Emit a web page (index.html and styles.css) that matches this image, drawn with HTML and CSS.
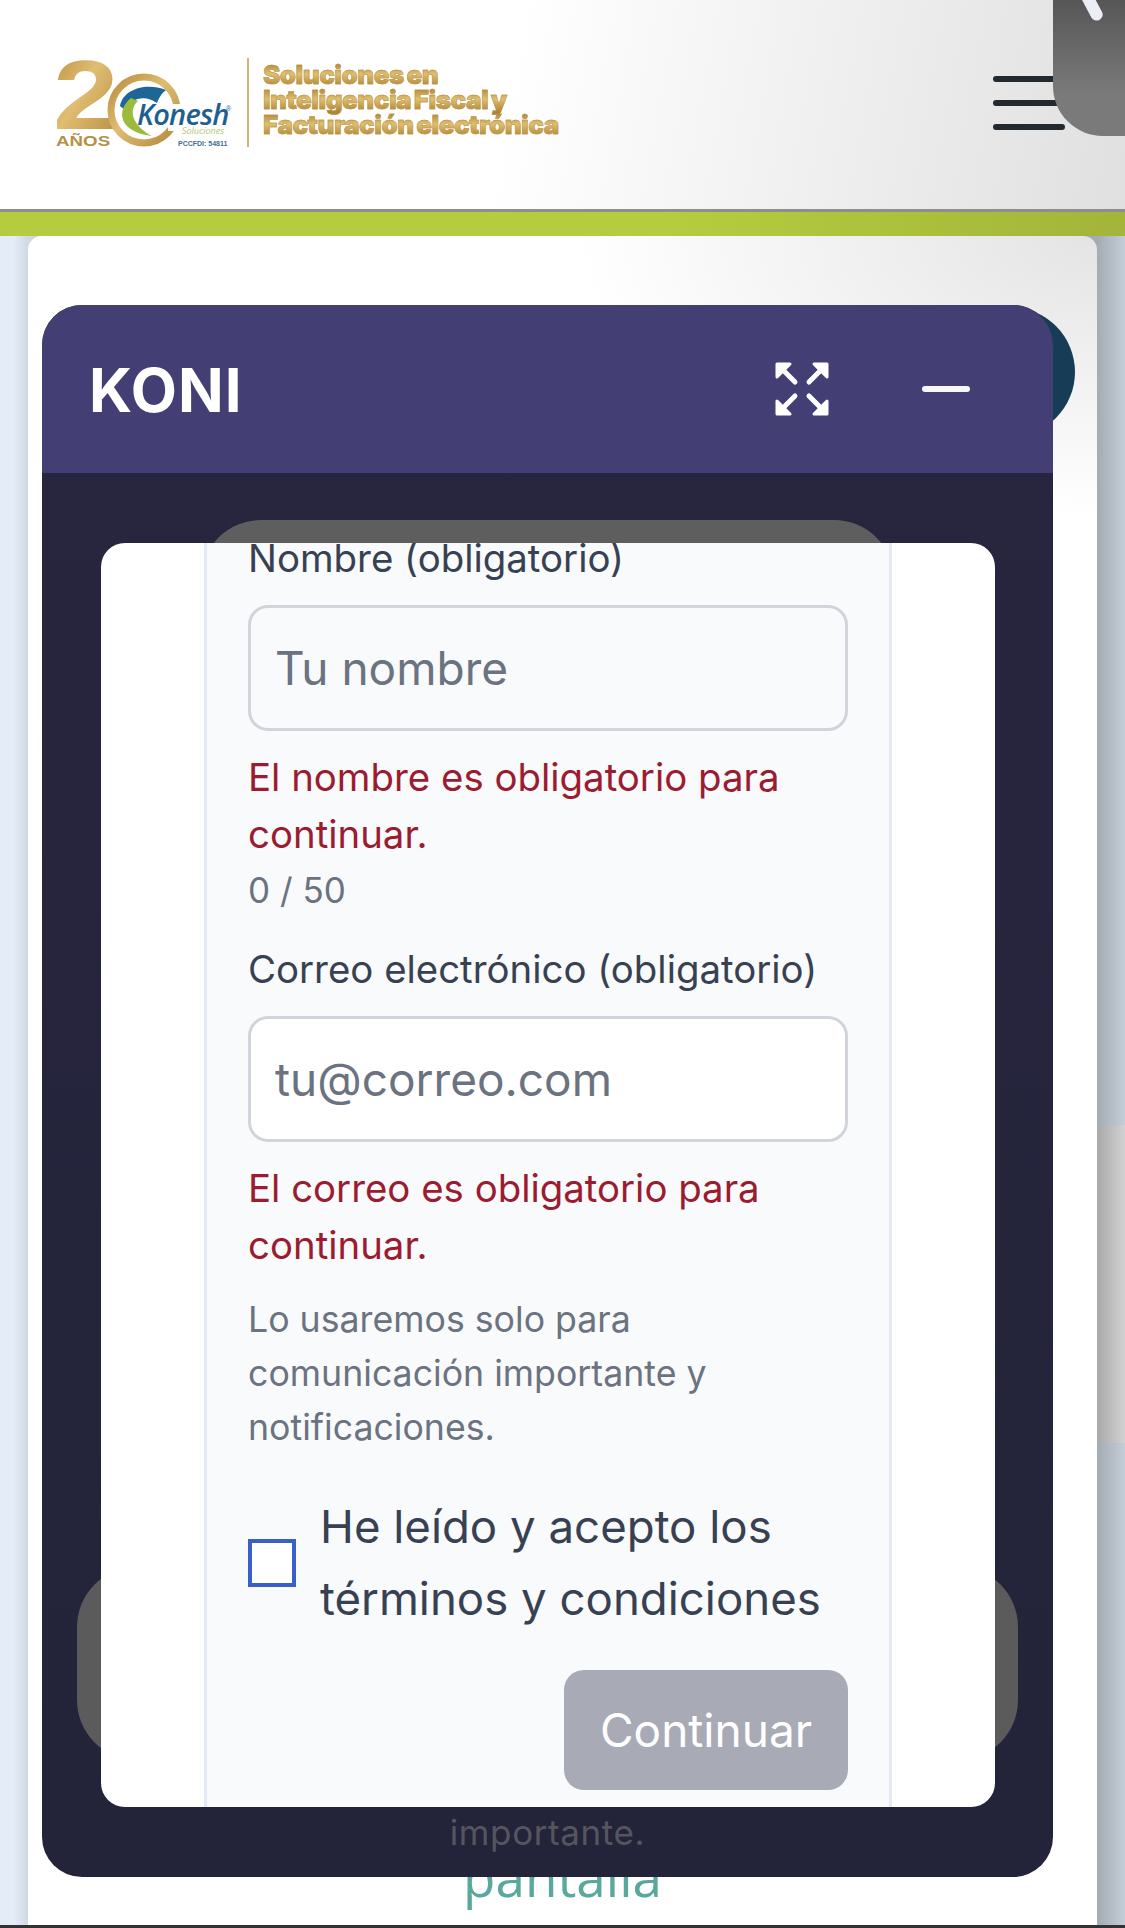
FILE: index.html
```html
<!DOCTYPE html>
<html lang="es">
  <head>
    <meta charset="UTF-8" />
    <meta name="viewport" content="width=device-width, initial-scale=1.0" />
    <title>Konesh Soluciones</title>
    <link rel="stylesheet" href="styles.css">
  </head>
  <body>
    <header class="site-header">
      <div class="brand">
        <svg class="brand-mark" width="190" height="100" viewBox="0 0 190 100">
          <defs>
            <linearGradient id="gold" x1="0" y1="0" x2="1" y2="1">
              <stop offset="0" stop-color="#b98c3e" />
              <stop offset="0.45" stop-color="#e0bd72" />
              <stop offset="1" stop-color="#b2883c" />
            </linearGradient>
          </defs>
          <text transform="translate(-3 69) scale(1.2 1)" class="mark-two" fill="url(#gold)">2</text>
          <circle cx="88" cy="50" r="33" fill="#fff" stroke="url(#gold)" stroke-width="7" />
          <text transform="translate(0 86) scale(1.25 1)" class="mark-years" fill="#b98f45">AÑOS</text>
          <rect x="112" y="44" width="60" height="27" fill="#fff" />
          <path d="M64 46 C67 29 90 22 110 30 C105 34 103 38 101 43 C90 35 75 37 69 50 Z" fill="#1f6596" />
          <path d="M75 38 C60 50 62 72 96 76 C80 68 70 52 82 41 Z" fill="#9bbb3c" />
          <text x="81" y="65" class="mark-name" fill="#1f5f8f">Konesh</text>
          <text x="170" y="51" class="mark-reg" fill="#1f5f8f">®</text>
          <text x="126" y="74" class="mark-sub" fill="#b4c873">Soluciones</text>
          <text x="122" y="86" class="mark-cert" fill="#3f6f96">PCCFDI: 54811</text>
        </svg>
        <span class="brand-line"></span>
        <p class="brand-text">Soluciones en<br />Inteligencia Fiscal y<br />Facturación electrónica</p>
      </div>
      <button class="menu-btn" aria-label="Menú"><span></span><span></span><span></span></button>
      <div class="float-btn"><span class="float-mark"></span></div>
    </header>
    <div class="green-bar"></div>

    <main class="page">
      <div class="card">
        <p class="card-text">pantalla</p>
      </div>
      <div class="side-shade"></div>
    </main>

    <div class="teal-circle"></div>

    <section class="chat">
      <div class="chat-head">
        <h2>KONI</h2>
        <div class="chat-tools">
          <svg width="54" height="54" viewBox="0 0 54 54" fill="#fff" stroke="#fff" stroke-linecap="round" stroke-linejoin="round">
            <path d="M5 5 L20 20" stroke-width="5" />
            <path d="M2 2 H15 L2 15 Z" stroke-width="3" />
            <path d="M49 5 L34 20" stroke-width="5" />
            <path d="M52 2 H39 L52 15 Z" stroke-width="3" />
            <path d="M5 49 L20 34" stroke-width="5" />
            <path d="M2 52 H15 L2 39 Z" stroke-width="3" />
            <path d="M49 49 L34 34" stroke-width="5" />
            <path d="M52 52 H39 L52 39 Z" stroke-width="3" />
          </svg>
          <span class="minus"></span>
        </div>
      </div>
      <div class="chat-body">
        <div class="ghost ghost-top"></div>
        <div class="ghost ghost-low"></div>
        <p class="ghost-text">importante.</p>

        <div class="dialog">
          <form class="form">
            <label class="field-label first" for="nombre">Nombre (obligatorio)</label>
            <input class="field-input grey" id="nombre" type="text" placeholder="Tu nombre" />
            <p class="error">El nombre es obligatorio para continuar.</p>
            <p class="counter">0 / 50</p>

            <label class="field-label second" for="correo">Correo electrónico (obligatorio)</label>
            <input class="field-input" id="correo" type="email" placeholder="tu@correo.com" />
            <p class="error">El correo es obligatorio para continuar.</p>
            <p class="hint">Lo usaremos solo para comunicación importante y notificaciones.</p>

            <div class="terms">
              <input class="terms-box" id="terms" type="checkbox" />
              <label for="terms">He leído y acepto los términos y condiciones</label>
            </div>

            <div class="actions">
              <button class="continue" type="button">Continuar</button>
            </div>
          </form>
        </div>
      </div>
    </section>
  </body>
</html>
```

FILE: styles.css
```css
* {
  box-sizing: border-box;
}
html,
body {
  margin: 0;
  height: 1928px;
  overflow: hidden;
}
body {
  position: relative;
  width: 1125px;
  font-family: Inter, "Liberation Sans", sans-serif;
  background: #fff;
  border-bottom: 3px solid #333;
}
p {
  margin: 0;
}

/* header */
.site-header {
  position: relative;
  height: 212px;
  padding: 58px 60px 0 56px;
  display: flex;
  justify-content: space-between;
  background: linear-gradient(100deg, #fff 45%, #e0e0e0 100%);
  border-bottom: 3px solid #8c8f8d;
}
.brand {
  display: flex;
  align-items: flex-start;
}
.brand-mark {
  margin-top: 2px;
  overflow: visible;
}
.mark-two {
  font: 700 98px "Liberation Sans", sans-serif;
}
.mark-years {
  font: 700 15px "Liberation Sans", sans-serif;
}
.mark-name {
  font: italic 600 29px "Open Sans", sans-serif;
  letter-spacing: -0.8px;
}
.mark-reg {
  font: 400 7px "Liberation Sans", sans-serif;
}
.mark-sub {
  font: italic 400 9px "Open Sans", sans-serif;
}
.mark-cert {
  font: 700 7px "Liberation Sans", sans-serif;
}
.brand-line {
  width: 2px;
  height: 89px;
  margin-left: 1px;
  background: #d2b478;
}
.brand-text {
  margin: 4px 0 0 14px;
  font-size: 26px;
  font-weight: 900;
  line-height: 25px;
  letter-spacing: -0.5px;
  word-spacing: -2px;
  color: transparent;
  background: repeating-linear-gradient(180deg, #a9822f 0, #e0bf70 12px, #ad8434 25px);
  -webkit-background-clip: text;
  background-clip: text;
  -webkit-text-stroke: 0.5px #b89044;
}
.menu-btn {
  display: flex;
  flex-direction: column;
  gap: 18px;
  align-self: flex-start;
  margin: 18px 0 0;
  padding: 0;
  border: none;
  background: none;
}
.menu-btn span {
  width: 72px;
  height: 6px;
  border-radius: 3px;
  background: #22292f;
}
.float-btn {
  position: absolute;
  top: 0;
  left: 1053px;
  width: 72px;
  height: 136px;
  border-bottom-left-radius: 50px;
  background: linear-gradient(180deg, #565656, #7a7a7a 70%);
  overflow: hidden;
}
.float-mark {
  position: absolute;
  top: -14px;
  left: 32px;
  width: 12px;
  height: 36px;
  border-radius: 6px;
  background: #eceef5;
  transform: rotate(-28deg);
}
.green-bar {
  height: 24px;
  background: linear-gradient(90deg, #b5cc3f 60%, #a3b53a 100%);
}

/* page behind the chat */
.page {
  position: relative;
  height: 1689px;
  padding: 0 28px;
  background: linear-gradient(90deg, #e4edf7 0, #e4edf7 14px, #d0d9e3 28px, #a3abb3 1097px, #c4ced8 1125px);
}
.card {
  height: 100%;
  padding-top: 1611px;
  text-align: center;
  border-top-left-radius: 14px;
  border-top-right-radius: 14px;
  background: radial-gradient(ellipse 520px 280px at 100% 0, #e4e4e4, #fff 100%);
}
.card-text {
  font-family: "Open Sans", sans-serif;
  font-size: 53px;
  line-height: 60px;
  color: #58a89c;
}
.side-shade {
  position: absolute;
  top: 889px;
  right: 0;
  width: 28px;
  height: 318px;
  background: linear-gradient(90deg, #a9a9a9, #d2d2d2);
}
.teal-circle {
  position: absolute;
  top: 307px;
  left: 945px;
  width: 130px;
  height: 130px;
  border-radius: 50%;
  background: #173c56;
}

/* chat window */
.chat {
  position: absolute;
  top: 305px;
  left: 42px;
  width: 1011px;
  height: 1572px;
  display: flex;
  flex-direction: column;
  border-radius: 40px;
  overflow: hidden;
  background: linear-gradient(180deg, #27263e, #23233a);
}
.chat-head {
  height: 168px;
  padding: 0 83px 0 47px;
  display: flex;
  align-items: flex-start;
  justify-content: space-between;
  background: #433e74;
}
.chat-head h2 {
  margin: 49px 0 0;
  font-size: 60px;
  font-weight: 700;
  line-height: 72px;
  letter-spacing: 1px;
  color: #fff;
}
.chat-tools {
  display: flex;
  align-items: flex-start;
  gap: 93px;
  margin-top: 57px;
}
.minus {
  width: 48px;
  height: 6px;
  margin-top: 24px;
  border-radius: 3px;
  background: #f7f6fb;
}
.chat-body {
  position: relative;
  flex: 1;
}
.ghost {
  position: absolute;
  border-radius: 60px;
  background: #5e5e5e;
}
.ghost-top {
  top: 47px;
  left: 159px;
  width: 693px;
  height: 200px;
}
.ghost-low {
  top: 1094px;
  left: 35px;
  width: 941px;
  height: 193px;
  background: #5b5b5b;
}
.ghost-text {
  position: absolute;
  top: 1337px;
  left: 0;
  width: 100%;
  text-align: center;
  font-size: 35px;
  line-height: 44px;
  letter-spacing: 0.6px;
  color: #55555f;
}
.dialog {
  position: absolute;
  top: 70px;
  left: 59px;
  width: 894px;
  height: 1264px;
  border-radius: 24px;
  overflow: hidden;
  background: #fff;
}
.form {
  display: flow-root;
  width: 688px;
  height: 100%;
  margin: 0 auto;
  padding: 0 41px;
  background: #f9fafc;
  border: solid #e5e9f2;
  border-width: 0 3px;
}
.field-label {
  display: block;
  font-size: 38.4px;
  line-height: 44px;
  color: #374151;
}
.field-label.first {
  margin-top: -7px;
}
.field-label.second {
  margin-top: 31px;
}
.field-input {
  display: block;
  width: 100%;
  height: 126px;
  margin-top: 25px;
  padding: 0 24px;
  font-family: inherit;
  font-size: 46px;
  background: #fff;
  border: 3px solid #d1d5db;
  border-radius: 20px;
}
.field-input.grey {
  background: #f9fafc;
}
.field-input::placeholder {
  color: #6b7280;
  opacity: 1;
}
.error {
  margin-top: 18px;
  font-size: 38.4px;
  line-height: 57px;
  color: #9b1c31;
}
.counter {
  margin-top: 2px;
  font-size: 35px;
  line-height: 51px;
  color: #6b7280;
}
.hint {
  margin-top: 18px;
  font-size: 35.7px;
  line-height: 54px;
  color: #6b7280;
}
.terms {
  display: flex;
  align-items: center;
  gap: 24px;
  margin-top: 37px;
  font-size: 45.6px;
  line-height: 72px;
  color: #374151;
}
.terms-box {
  appearance: none;
  flex: none;
  width: 48px;
  height: 48px;
  margin: 0;
  background: #fff;
  border: 4px solid #3b5fc9;
}
.actions {
  display: flex;
  justify-content: flex-end;
  margin-top: 35px;
}
.continue {
  width: 284px;
  height: 120px;
  font-family: inherit;
  font-size: 46px;
  color: #fff;
  background: #a8abb5;
  border: none;
  border-radius: 20px;
}
```
